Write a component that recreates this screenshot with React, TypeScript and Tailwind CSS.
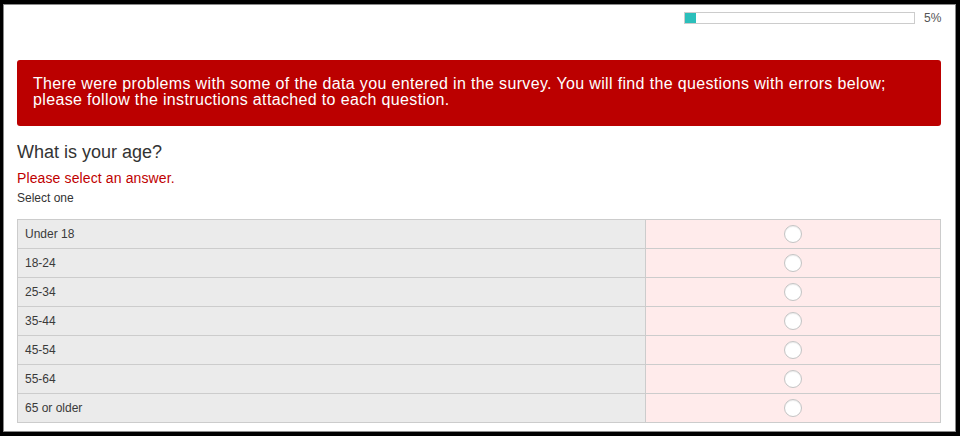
const options = ["Under 18", "18-24", "25-34", "35-44", "45-54", "55-64", "65 or older"];

function ProgressBar({ percent }: { percent: number }) {
  return (
    <div className="flex items-center justify-end mt-[7px] h-[12px]">
      <div className="w-[231px] h-[12px] border border-[#cccccc] bg-white">
        <div className="h-full bg-[#2bbfbb]" style={{ width: `${percent}%` }} />
      </div>
      <span className="ml-[9px] w-[17px] text-[12px] leading-[12px] text-[#555]">{percent}%</span>
    </div>
  );
}

function OptionRow({ label }: { label: string }) {
  return (
    <div className="flex h-[29px] border-b border-[#cccccc]">
      <div className="w-[628px] bg-[#ebebeb] border-r border-[#cccccc] flex items-center pl-[7px] text-[12px] text-[#3a3a3a]">
        {label}
      </div>
      <div className="flex-1 bg-[#ffebeb] flex items-center justify-center">
        <span className="w-[18px] h-[18px] rounded-full bg-white border border-[#c4c4c4] shadow-[inset_0_1px_1px_rgba(0,0,0,0.08)]" />
      </div>
    </div>
  );
}

export default function App() {
  return (
    <div className="h-[436px] w-[960px] bg-black pt-[4px] pl-[3px] pr-[4px] pb-[4px] font-['Liberation_Sans',Arial,sans-serif]">
      <div className="h-full bg-white border border-[#8a8a8a] pl-[13px] pr-[14px]">
        <ProgressBar percent={5} />

        <div className="mt-[36px] rounded-[3px] bg-[#bb0000] pl-[16px] pr-[16px] pt-[16px] pb-[18px] text-white text-[16px] leading-[16px] tracking-[0.35px]">
          There were problems with some of the data you entered in the survey. You will find the questions with errors below;
          <br />
          please follow the instructions attached to each question.
        </div>

        <h2 className="mt-[16px] text-[18px] leading-[20px] text-[#333]">What is your age?</h2>
        <p className="mt-[8px] text-[14px] leading-[16px] tracking-[0.12px] text-[#c00000]">Please select an answer.</p>
        <p className="mt-[5px] text-[12px] leading-[14px] text-[#333]">Select one</p>

        <div className="mt-[14px] border-t border-l border-r border-[#cccccc]">
          {options.map((o) => (
            <OptionRow key={o} label={o} />
          ))}
        </div>
      </div>
    </div>
  );
}
